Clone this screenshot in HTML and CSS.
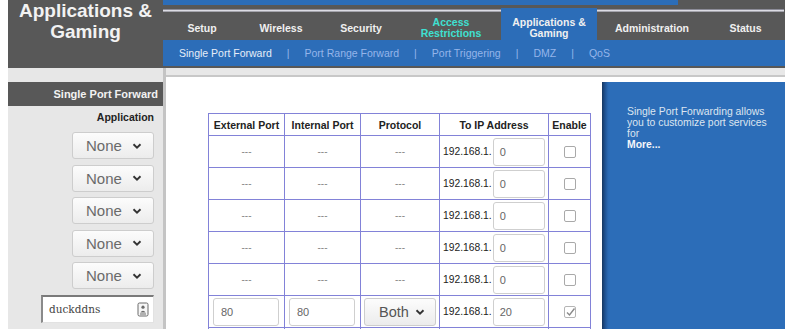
FILE: index.html
```html
<!DOCTYPE html>
<html>
<head>
<meta charset="utf-8">
<title>Applications &amp; Gaming</title>
<link rel="stylesheet" href="styles.css">
</head>
<body>
<div class="page">
  <header class="header">
    <div class="title">Applications &amp;<br>Gaming</div>
    <div class="nav">
      <div class="topbar"><div class="topbar-blue"></div></div>
      <div class="tabs">
        <div class="tab t-setup">Setup</div>
        <div class="tab t-wireless">Wireless</div>
        <div class="tab t-security">Security</div>
        <div class="tab t-access cyan">Access<br>Restrictions</div>
        <div class="tab t-apps active">Applications &amp;<br>Gaming</div>
        <div class="tab t-admin">Administration</div>
        <div class="tab t-status">Status</div>
      </div>
      <div class="subnav">
        <span class="current">Single Port Forward</span><span class="sep">|</span>
        <span>Port Range Forward</span><span class="sep">|</span>
        <span>Port Triggering</span><span class="sep">|</span>
        <span>DMZ</span><span class="sep">|</span>
        <span>QoS</span>
      </div>
    </div>
  </header>

  <div class="main">
    <aside class="sidebar">
      <div class="side-head">Single Port Forward</div>
      <div class="side-label">Application</div>
      <div class="side-list">
        <div class="sel"><span>None</span><svg class="chev" width="10" height="6" viewBox="0 0 10 6"><polyline points="1.5,1.2 5,4.6 8.5,1.2" fill="none" stroke="#333" stroke-width="1.9"/></svg></div>
        <div class="sel"><span>None</span><svg class="chev" width="10" height="6" viewBox="0 0 10 6"><polyline points="1.5,1.2 5,4.6 8.5,1.2" fill="none" stroke="#333" stroke-width="1.9"/></svg></div>
        <div class="sel"><span>None</span><svg class="chev" width="10" height="6" viewBox="0 0 10 6"><polyline points="1.5,1.2 5,4.6 8.5,1.2" fill="none" stroke="#333" stroke-width="1.9"/></svg></div>
        <div class="sel"><span>None</span><svg class="chev" width="10" height="6" viewBox="0 0 10 6"><polyline points="1.5,1.2 5,4.6 8.5,1.2" fill="none" stroke="#333" stroke-width="1.9"/></svg></div>
        <div class="sel"><span>None</span><svg class="chev" width="10" height="6" viewBox="0 0 10 6"><polyline points="1.5,1.2 5,4.6 8.5,1.2" fill="none" stroke="#333" stroke-width="1.9"/></svg></div>
        <div class="text-in"><span>duckddns</span><svg class="key" width="12" height="15" viewBox="0 0 12 15"><rect x="1" y="1" width="10" height="13" rx="1.5" fill="#f6f6f6" stroke="#6a6a6a" stroke-width="1"/><circle cx="6" cy="5.2" r="1.6" fill="#6a6a6a"/><path d="M3.3 10.5 Q6 6.8 8.7 10.5 Z" fill="#6a6a6a"/><line x1="3" y1="12" x2="9" y2="12" stroke="#6a6a6a" stroke-width="1"/></svg></div>
        <div class="text-in"></div>
      </div>
    </aside>

    <div class="body">
      <div class="strip"></div>
      <div class="cols">
        <section class="content">
          <table class="ports">
            <colgroup>
              <col class="c-ext"><col class="c-int"><col class="c-proto"><col class="c-ip"><col class="c-en">
            </colgroup>
            <thead>
              <tr><th>External Port</th><th>Internal Port</th><th>Protocol</th><th>To IP Address</th><th>Enable</th></tr>
            </thead>
            <tbody>
              <tr><td>---</td><td>---</td><td>---</td><td><div class="ip"><span>192.168.1.</span><div class="box ipbox">0</div></div></td><td><span class="cb"></span></td></tr>
              <tr><td>---</td><td>---</td><td>---</td><td><div class="ip"><span>192.168.1.</span><div class="box ipbox">0</div></div></td><td><span class="cb"></span></td></tr>
              <tr><td>---</td><td>---</td><td>---</td><td><div class="ip"><span>192.168.1.</span><div class="box ipbox">0</div></div></td><td><span class="cb"></span></td></tr>
              <tr><td>---</td><td>---</td><td>---</td><td><div class="ip"><span>192.168.1.</span><div class="box ipbox">0</div></div></td><td><span class="cb"></span></td></tr>
              <tr><td>---</td><td>---</td><td>---</td><td><div class="ip"><span>192.168.1.</span><div class="box ipbox">0</div></div></td><td><span class="cb"></span></td></tr>
              <tr>
                <td><div class="box port">80</div></td>
                <td><div class="box port">80</div></td>
                <td><div class="proto"><span>Both</span><svg class="chev" width="10" height="6" viewBox="0 0 10 6"><polyline points="1.5,1.2 5,4.6 8.5,1.2" fill="none" stroke="#333" stroke-width="1.9"/></svg></div></td>
                <td><div class="ip"><span>192.168.1.</span><div class="box ipbox">20</div></div></td>
                <td><span class="cb checked"><svg width="11" height="11" viewBox="0 0 11 11"><polyline points="2,5.5 4.5,8 9.5,1.5" fill="none" stroke="#8a8a8a" stroke-width="1.4"/></svg></span></td>
              </tr>
              <tr class="row-clip">
                <td><div class="box port grey"></div></td>
                <td><div class="box port grey"></div></td>
                <td><div class="proto"></div></td>
                <td><div class="ip ip-empty"><div class="box ipbox"></div></div></td>
                <td></td>
              </tr>
            </tbody>
          </table>
        </section>
        <div class="panel-col">
          <div class="panel">
            <p class="panel-text">Single Port Forwarding allows you to customize port services for</p>
            <p class="panel-more">More...</p>
          </div>
        </div>
      </div>
    </div>
  </div>
</div>
</body>
</html>
```

FILE: styles.css
```css
* { box-sizing: border-box; margin: 0; padding: 0; }

body {
  margin: 0;
  width: 800px;
  height: 329px;
  overflow: hidden;
  background: #ffffff;
  font-family: "Liberation Sans", Arial, sans-serif;
}

.page { padding-left: 8px; width: 800px; height: 329px; overflow: hidden; }

/* ---------- header ---------- */
.header {
  display: flex;
  width: 777px;
  height: 68px;
  background: #585858;
}

.title {
  width: 155px;
  color: #f2f2f2;
  font-weight: bold;
  font-size: 19px;
  line-height: 21px;
  text-align: center;
}

.nav { width: 622px; display: flex; flex-direction: column; }

.topbar { height: 5px; display: flex; flex-shrink: 0; }
.topbar-blue { width: 515px; background: #2c6db8; }

.tabs { margin-top: 3px; height: 32px; display: flex; flex-shrink: 0; }

.tab {
  display: flex;
  align-items: center;
  justify-content: center;
  text-align: center;
  padding-top: 8px;
  color: #f0f0f0;
  font-weight: bold;
  font-size: 10.5px;
  line-height: 11px;
  background: linear-gradient(to bottom,
    #585858 0, #585858 1px,
    #8c8c98 1px, #8c8c98 2px,
    #dcdce4 2px, #dcdce4 3px,
    #a4a4ac 3px, #a4a4ac 4px,
    #585858 4px);
}
.tab.active { background: #2c6db8; }
.tab.cyan { color: #3ee0d2; }

.t-setup { width: 78px; }
.t-wireless { width: 80px; }
.t-security { width: 80px; }
.t-access { width: 100px; }
.t-apps { width: 96px; }
.t-admin { width: 110px; }
.t-status { width: 77px; }

.subnav {
  height: 26px;
  flex-shrink: 0;
  background: #2c6db8;
  display: flex;
  align-items: center;
  padding-left: 16px;
  gap: 15px;
  font-size: 10.5px;
  color: #95b5ea;
}
.subnav .current { color: #e6edf8; }

/* ---------- main ---------- */
.main { display: flex; height: 261px; overflow: hidden; }

.sidebar {
  width: 158px;
  height: 261px;
  overflow: hidden;
  background: #e7e7e7;
  border-right: 3px solid #c4c4c4;
  padding-top: 14px;
  display: flex;
  flex-direction: column;
}
.sidebar > * { flex-shrink: 0; }

.side-head {
  height: 24px;
  background: #585858;
  color: #f2f2f2;
  font-weight: bold;
  font-size: 11px;
  display: flex;
  align-items: center;
  justify-content: flex-end;
  padding-right: 5px;
}

.side-label {
  margin-top: 5px;
  height: 12px;
  line-height: 12px;
  text-align: right;
  padding-right: 9px;
  font-weight: bold;
  font-size: 10.5px;
  color: #222;
}

.side-list {
  margin-top: 9px;
  display: flex;
  flex-direction: column;
  align-items: flex-end;
  padding-right: 9px;
  gap: 5.6px;
}

.sel {
  width: 82px;
  height: 27px;
  flex-shrink: 0;
  display: flex;
  align-items: center;
  padding-left: 13px;
  gap: 10px;
  border: 1px solid #cdcdcd;
  border-radius: 3px;
  background: linear-gradient(to bottom, #fcfcfc, #ececec);
  color: #6a6a6a;
  font-size: 15px;
}

.text-in {
  width: 113px;
  height: 28px;
  flex-shrink: 0;
  display: flex;
  align-items: center;
  justify-content: space-between;
  padding: 0 4px 0 6px;
  background: #fff;
  border-top: 2px solid #7a7a7a;
  border-left: 2px solid #8a8a8a;
  border-right: 1px solid #e2e2e2;
  border-bottom: 1px solid #e2e2e2;
  font-family: "DejaVu Serif", "Liberation Serif", serif;
  font-size: 10.5px;
  color: #444;
}

/* ---------- content ---------- */
.body { width: 619px; display: flex; flex-direction: column; }

.strip {
  height: 9px;
  flex-shrink: 0;
  background: #e8e8e8;
  border-bottom: 2px solid #c8c8c8;
}

.cols { display: flex; flex: 1; overflow: hidden; }

.content { width: 436px; padding: 36px 0 0 42px; background: #fff; overflow: hidden; }

.ports { border-collapse: collapse; table-layout: fixed; width: 382px; }
.c-ext { width: 76px; }
.c-int { width: 76px; }
.c-proto { width: 79px; }
.c-ip { width: 109px; }
.c-en { width: 42px; }

.ports th, .ports td {
  border: 1px solid #8282d8;
  text-align: center;
  vertical-align: middle;
  padding: 0;
}
.ports th { height: 22px; font-size: 10.5px; font-weight: bold; color: #222; }
.ports td { height: 32px; font-size: 10px; color: #888; }
.row-clip td { vertical-align: top; padding-top: 2px; }

.ip {
  display: flex;
  align-items: center;
  padding-left: 3px;
  gap: 1px;
  font-size: 10.3px;
  color: #222;
  text-align: left;
}
.ip-empty { padding-left: 53px; }

.box {
  height: 28px;
  border: 1px solid #cfcfcf;
  border-radius: 3px;
  background: #fff;
  display: flex;
  align-items: center;
  color: #666;
  font-size: 11px;
}
.ipbox { width: 52px; padding-left: 6px; }
.port { width: 66px; margin-left: 4px; padding-left: 7px; }
.port.grey, .proto:empty { background: linear-gradient(to bottom, #e9e9e9, #f4f4f4); }

.proto {
  width: 72px;
  height: 28px;
  margin-left: 3px;
  display: flex;
  align-items: center;
  padding-left: 14px;
  gap: 6px;
  border: 1px solid #cdcdcd;
  border-radius: 3px;
  background: linear-gradient(to bottom, #fcfcfc, #ececec);
  color: #555;
  font-size: 14.5px;
}

.cb {
  display: inline-block;
  width: 12px;
  height: 12px;
  border: 1px solid #a9a9a9;
  border-radius: 2px;
  background: #fff;
  vertical-align: middle;
}
.cb svg { display: block; }
.cb.checked { border-color: #b5b5b5; }

/* ---------- right panel ---------- */
.panel-col { width: 183px; padding-top: 5px; background: #fff; }

.panel {
  height: 100%;
  background: linear-gradient(to right, #163760 0, #1f5190 3px, #2a69b2 6px, #2c6db8 8px);
  padding: 24px 8px 0 25px;
  color: #dde5f0;
  font-size: 10.4px;
  line-height: 11px;
}
.panel-text { width: 150px; }
.panel-more { font-weight: bold; color: #f4f6fa; }
```
